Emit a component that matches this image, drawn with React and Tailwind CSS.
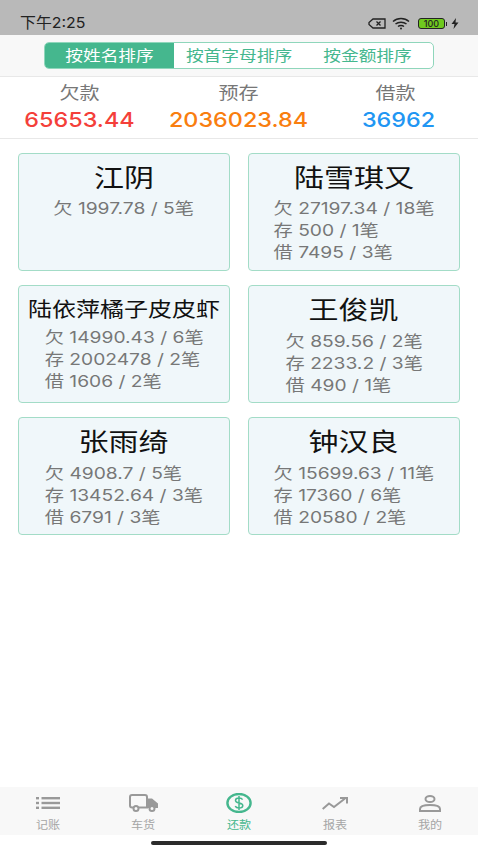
const FONT = 'font-["Inter","Noto_Sans_CJK_SC",sans-serif]';

const CARDS = [
  { name: '江阴', lines: ['欠 1997.78 / 5笔'] },
  { name: '陆雪琪又', lines: ['欠 27197.34 / 18笔', '存 500 / 1笔', '借 7495 / 3笔'] },
  { name: '陆依萍橘子皮皮虾', small: true, lines: ['欠 14990.43 / 6笔', '存 2002478 / 2笔', '借 1606 / 2笔'] },
  { name: '王俊凯', lower: true, lines: ['欠 859.56 / 2笔', '存 2233.2 / 3笔', '借 490 / 1笔'] },
  { name: '张雨绮', lower: true, lines: ['欠 4908.7 / 5笔', '存 13452.64 / 3笔', '借 6791 / 3笔'] },
  { name: '钟汉良', lower: true, lines: ['欠 15699.63 / 11笔', '存 17360 / 6笔', '借 20580 / 2笔'] },
];

function ListIcon() {
  return (
    <svg width="24" height="12" viewBox="0 0 24 12" fill="#999">
      <rect x="0" y="0" width="3" height="2.400" />
      <rect x="0" y="4.800" width="3" height="2.400" />
      <rect x="0" y="9.600" width="3" height="2.400" />
      <rect x="5.500" y="0" width="18.500" height="2.400" />
      <rect x="5.500" y="4.800" width="18.500" height="2.400" />
      <rect x="5.500" y="9.600" width="18.500" height="2.400" />
    </svg>
  );
}

function TruckIcon() {
  return (
    <svg width="29" height="18" viewBox="0 0 29 18" fill="none" stroke="#999" strokeWidth="2">
      <path d="M4 13.500H3a2 2 0 0 1-2-2V3a2 2 0 0 1 2-2h13a2 2 0 0 1 2 2v10.500H10" />
      <path d="M18 4.500h5l6 5v4.500h-11z" fill="#999" stroke="none" />
      <circle cx="7" cy="14.500" r="2.500" fill="#f8f8f8" />
      <circle cx="23" cy="14.500" r="2.500" fill="#f8f8f8" />
    </svg>
  );
}

function DollarIcon() {
  return (
    <svg width="26" height="20" viewBox="0 0 26 20" fill="none" stroke="#45b78e">
      <ellipse cx="13" cy="10" rx="11.600" ry="9" strokeWidth="2.400" />
      <path d="M16.600 6.600c-.6-1-1.900-1.600-3.600-1.600-2 0-3.500 1-3.500 2.500 0 3.300 7.300 1.700 7.300 5 0 1.500-1.600 2.500-3.800 2.500-1.800 0-3.200-.7-3.800-1.800M13 3v14" strokeWidth="1.500" />
    </svg>
  );
}

function TrendIcon() {
  return (
    <svg width="26" height="13" viewBox="0 0 26 13" fill="none" stroke="#999" strokeWidth="2">
      <path d="M0.700 12 7 6.500l5 3.500 11-8.500" />
      <path d="M18 1h7v5.500" />
    </svg>
  );
}

function PersonIcon() {
  return (
    <svg width="22" height="17" viewBox="0 0 22 17" fill="none" stroke="#999" strokeWidth="2">
      <ellipse cx="11" cy="4" rx="4.500" ry="3" />
      <path d="M1 16v-2c0-2.500 3-4 10-4s10 1.500 10 4v2z" />
    </svg>
  );
}

function TabItem({ icon, label, active }) {
  return (
    <div className="flex flex-1 flex-col items-center">
      <div className="flex h-[22px] items-center">{icon}</div>
      <div className={`mt-[3px] scale-x-[1.1] text-[11px] leading-[16px] ${active ? 'text-[#45b78e]' : 'text-[#a6a6a6]'}`}>{label}</div>
    </div>
  );
}

function Card({ name, small, lower, lines }) {
  return (
    <div className="flex h-[118px] flex-col items-center rounded-[4px] border border-[#a3dcc7] bg-[#f0f7fa]">
      <div className={`scale-x-[1.2] text-[#111] ${small ? 'mt-[8px] h-[32px] text-[20px] leading-[32px]' : 'mt-[6px] h-[36px] text-[25px] leading-[36px]'}`}>
        {name}
      </div>
      <div className={`scale-x-[1.2] ${lower ? 'mt-[2px]' : small ? '' : 'mt-[1px]'}`}>
        {lines.map((line) => (
          <div key={line} className="text-[16px] leading-[22px] text-[#777]">{line}</div>
        ))}
      </div>
    </div>
  );
}

function Total({ label, value, color, className, labelClass = '' }) {
  return (
    <div className={className}>
      <div className={`scale-x-[1.18] text-[17px] leading-[24px] text-[#777] ${labelClass}`}>{label}</div>
      <div className={`scale-x-[1.14] whitespace-nowrap text-[20.500px] leading-[30px] font-medium ${color}`}>{value}</div>
    </div>
  );
}

export default function App() {
  return (
    <div className={`flex h-[850px] w-[478px] flex-col overflow-hidden bg-white ${FONT}`}>
      <div className="flex h-[35px] items-end justify-between bg-[#b9b9b9] pb-[2px] pl-[20px] pr-[19px]">
        <span className="origin-left scale-x-[1.06] text-[15px] leading-[20px] text-[#222]">下午2:25</span>
        <div className="mb-[3px] flex items-center gap-[6px]">
          <svg width="18" height="11" viewBox="0 0 18 11" fill="none" stroke="#222" strokeWidth="1.300">
            <path d="M5 1h12v9H5L1 6.500V4.500z" />
            <path d="M8.500 3.500l4 4M12.500 3.500l-4 4" />
          </svg>
          <svg width="20" height="13" viewBox="0 0 20 13" fill="none" stroke="#222" strokeWidth="1.500">
            <path d="M1 4.500c4.500-4 11.500-4 16 0M3.500 7c3-2.500 8-2.500 11 0M6 9.500c1.500-1.200 4.500-1.200 6 0" />
            <circle cx="9" cy="11.500" r="1" fill="#222" stroke="none" />
          </svg>
          <div className="flex items-center">
            <div className="flex h-[11px] w-[27px] items-center justify-center rounded-[3px] border border-[#222] bg-[#6fc91e] text-[9px] font-medium leading-none text-[#222]">100</div>
            <div className="ml-[1px] h-[4px] w-[1px] bg-[#222]" />
          </div>
          <svg width="8" height="11" viewBox="0 0 8 11" fill="#222" className="-ml-[2px]">
            <path d="M5 0 0.500 6H3.500L2.500 11 7.500 4.500H4.500z" />
          </svg>
        </div>
      </div>

      <div className="flex h-[42px] items-center justify-center border-b border-[#e8e8e8] bg-[#f8f8f8]">
        <div className="flex h-[27px] w-[390px] overflow-hidden rounded-[5px] border border-[#8fd6bb] bg-white text-[15px] leading-[25px] text-[#45b78e]">
          <div className="w-[129px] bg-[#45b78e] text-center text-white"><div className="scale-x-[1.18]">按姓名排序</div></div>
          <div className="w-[130px] text-center"><div className="scale-x-[1.18]">按首字母排序</div></div>
          <div className="flex-1 -translate-x-[1px] text-center"><div className="scale-x-[1.18]">按金额排序</div></div>
        </div>
      </div>

      <div className="flex h-[62px] border-b border-[#e8e8e8] pt-[4px] text-center">
        <Total label="欠款" value="65653.44" color="text-[#f43f3a]" className="ml-[25px] w-[109px]" />
        <Total label="预存" value="2036023.84" color="text-[#f97e0f]" className="ml-[35px] w-[139px]" />
        <Total label="借款" value="36962" color="text-[#2196f3]" className="ml-[54px] w-[73px]" labelClass="-translate-x-[3px]" />
      </div>

      <div className="grid grid-cols-2 gap-x-[18px] gap-y-[14px] px-[18px] pt-[14px]">
        {CARDS.map((card) => (
          <Card key={card.name} {...card} />
        ))}
      </div>

      <div className="mt-auto flex h-[48px] items-start bg-[#f8f8f8] pt-[5px]">
        <TabItem icon={<ListIcon />} label="记账" />
        <TabItem icon={<TruckIcon />} label="车货" />
        <TabItem icon={<DollarIcon />} label="还款" active />
        <TabItem icon={<TrendIcon />} label="报表" />
        <TabItem icon={<PersonIcon />} label="我的" />
      </div>
      <div className="flex h-[15px] items-center justify-center bg-white">
        <div className="h-[4px] w-[176px] rounded-full bg-[#2b2b2b]" />
      </div>
    </div>
  );
}
